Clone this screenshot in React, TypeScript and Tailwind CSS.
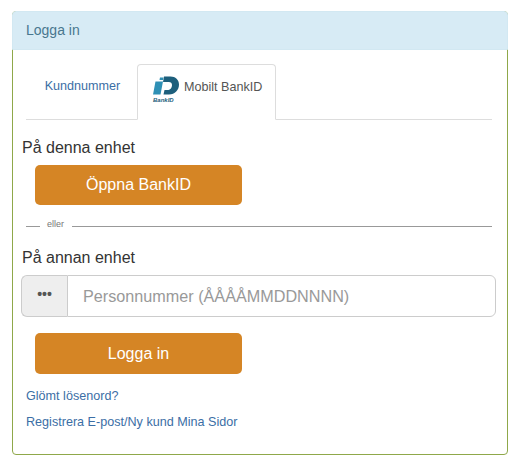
export default function App() {
  const btn =
    "ml-[13px] flex w-[207px] items-center justify-center rounded-[5px] bg-[#d58525] text-[16px] text-white";
  return (
    <div className="h-[460px] w-[516px] bg-white pl-3 pr-2 pt-[11px] font-['Liberation_Sans',Arial,sans-serif] text-[#333]">
      <div className="h-[444px] w-[496px] rounded-[4px] border border-[#8fa84a]">
        <div className="-m-px flex h-[39px] items-center rounded-t-[4px] border border-[#d2e8f2] bg-[#d7ebf5] pl-[13px] text-[14px] text-[#48778f]">
          Logga in
        </div>
        <div className="pl-[9px] pr-[15px] pt-[15px]">
          <div className="ml-[4px] flex h-[56px] border-b border-[#ddd]">
            <div className="flex h-[44px] w-[111px] items-center justify-center pl-[2px] text-[12.6px] text-[#3b6ea5]">
              Kundnummer
            </div>
            <div className="flex h-[56px] w-[139px] items-start gap-[5px] rounded-t-[4px] border border-[#ddd] border-b-white bg-white pl-[14px] pt-[10px] text-[12.6px] text-[#555]">
              <svg width="27" height="29" viewBox="0 0 27 29" className="shrink-0">
                <path d="M3.500 6.500h7.500L8.500 19.500H1z" fill="#2f90b5" />
                <path d="M8 2.500h3.500L11 5H7.500z" fill="#2f90b5" />
                <path d="M12 1.500h6.500c5 0 8.500 3.500 8.500 8 0 5.500-4 10-10 10h-5.500l1-4.500h3c2.500 0 4.500-2 4.500-5 0-1.800-1.200-3-3.200-3H11z" fill="#1d5f7c" />
                <text x="1" y="27" fontSize="6" fontWeight="700" fontStyle="italic" fill="#1d5f7c" fontFamily="Liberation Sans">BankID</text>
              </svg>
              <span className="mt-[3px]">Mobilt BankID</span>
            </div>
          </div>
          <div className="mt-[17px] text-[16px] leading-[22px]">På denna enhet</div>
          <div className={`${btn} mt-[6px] h-[40px]`}>Öppna BankID</div>
          <div className="mt-[13px] flex h-[16px] items-center pl-[4px] text-[9px] text-[#777]">
            <span className="h-px w-[14px] bg-[#999]" />
            <span className="ml-[7px] mr-[8px] -mt-[2px]">eller</span>
            <span className="h-px flex-1 bg-[#999]" />
          </div>
          <div className="mt-[13px] text-[16px] leading-[22px]">På annan enhet</div>
          <div className="mt-[6px] -ml-px -mr-[4px] flex h-[42px]">
            <div className="flex w-[46px] items-center justify-center rounded-l-[6px] border border-r-0 border-[#ccc] bg-[#eee] text-[14px] font-bold text-[#555]">
              <span className="-mt-[3px]">•••</span>
            </div>
            <div className="flex flex-1 items-center rounded-r-[6px] border border-[#ccc] bg-white pl-[15px] text-[16.2px] text-[#999]">
              Personnummer (ÅÅÅÅMMDDNNNN)
            </div>
          </div>
          <div className={`${btn} mt-[16px] h-[41px]`}>Logga in</div>
          <div className="mt-[14px] pl-[4px] text-[12.6px] leading-[17px] text-[#3b6ea5]">Glömt lösenord?</div>
          <div className="mt-[9px] pl-[4px] text-[12.6px] leading-[17px] text-[#3b6ea5]">Registrera E-post/Ny kund Mina Sidor</div>
        </div>
      </div>
    </div>
  );
}
